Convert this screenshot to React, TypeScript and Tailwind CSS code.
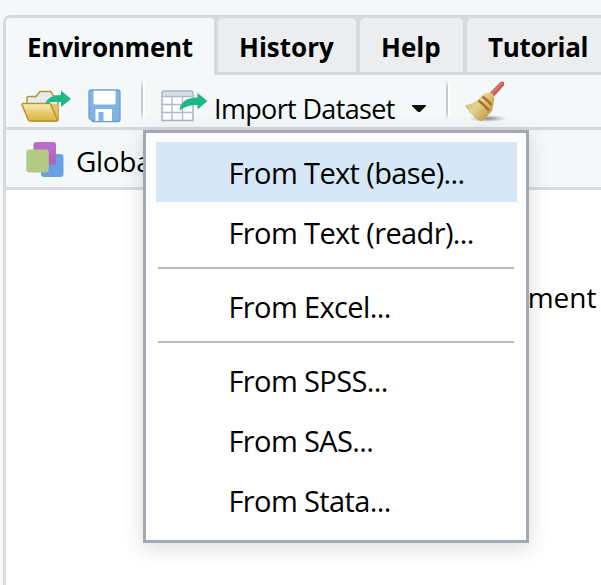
import React from "react";

const font = "font-['Open_Sans','Noto_Sans',sans-serif]";

function FolderIcon() {
  return (
    <svg width="50" height="34" viewBox="0 0 50 34" className="block">
      <defs>
        <linearGradient id="fold" x1="0" y1="0" x2="0" y2="1">
          <stop offset="0" stopColor="#f8efc0" />
          <stop offset="0.45" stopColor="#e9cf78" />
          <stop offset="1" stopColor="#ddb43d" />
        </linearGradient>
      </defs>
      <path d="M6 14V9q0-1.500 1.500-1.500H15l4-5h11l2 4 4 1.500q1 .5 1 2V30q0 2-2 2H11z" fill="#e9eaeb" stroke="#b79632" strokeWidth="1.500" />
      <path d="M29 15h7.500v16l-2 .5z" fill="#e5c566" />
      <path d="M1 15.500q0-1 1-1h26.500q1 0 1.500 1.500l6.500 15q.3 1-1 1H9q-1.200 0-1.700-1z" fill="url(#fold)" stroke="#b8932c" strokeWidth="1.500" />
      <path d="M24 15Q27 6 40 6V1.500L50 10l-10 8v-5q-10-.8-16 2z" fill="#1cb886" />
    </svg>
  );
}

function SaveIcon() {
  return (
    <svg width="33" height="34" viewBox="0 0 33 34" className="block">
      <path d="M3 1h27q2 0 2 2v27.500q0 2-2 2H5L1 29V3q0-2 2-2z" fill="#80b4e3" stroke="#6f9dca" strokeWidth="1.300" />
      <path d="M5.500 1.800h22V14q0 1.500-1.500 1.500H7Q5.500 15.500 5.500 14z" fill="#fff" />
      <path d="M7.500 20h16.500v12H7.500z" fill="#fdfdfd" />
      <path d="M10.500 23h5v9h-5z" fill="#80b4e3" />
    </svg>
  );
}

function TableIcon() {
  return (
    <svg width="48" height="34" viewBox="0 0 48 34" className="block">
      <path d="M1.500 3.500q0-2 2-2h26q2 0 2 2V31h-30z" fill="#fdfdff" />
      <path d="M1.500 6V3.500q0-2 2-2h26q2 0 2 2V6z" fill="#d7e0ea" />
      <path d="M1 6.500h30M1 14.500h30M1 22.500h30M11 6.500V31M21.500 6.500V31" stroke="#b2b9cd" strokeWidth="1.300" fill="none" />
      <path d="M1 30.500V3.500q0-2.500 2.500-2.500h26q2.500 0 2.500 2.500v27z" stroke="#a9b4c2" strokeWidth="1.500" fill="none" />
      <path d="M18.500 20.500Q19.500 8 36.500 7.500V3l10 8-10 8.500v-4.500q-10-.5-18 5.500z" fill="#1cb886" />
    </svg>
  );
}

function BroomIcon() {
  return (
    <svg width="42" height="42" viewBox="0 0 42 42" className="block">
      <defs>
        <linearGradient id="straw" x1="0.100" y1="0.200" x2="0.900" y2="0.800">
          <stop offset="0" stopColor="#cdb673" />
          <stop offset="0.400" stopColor="#e6d592" />
          <stop offset="1" stopColor="#bd9545" />
        </linearGradient>
        <radialGradient id="dust">
          <stop offset="0" stopColor="#777" stopOpacity="0.850" />
          <stop offset="1" stopColor="#888" stopOpacity="0" />
        </radialGradient>
      </defs>
      <ellipse cx="24" cy="37.500" rx="19" ry="3.500" fill="url(#dust)" />
      <path d="M26 11.500L36.500 .9q1.300-.7 3.500 0V4.500L30 15.500z" fill="#c95f54" />
      <path d="M27.500 12.500L38 2" stroke="#dc8377" strokeWidth="1.200" />
      <path d="M19 13.500Q24 10 28 12.500q3.500 3 2 8L28 30l-9 9.500q-4 1.500-7-2Q5 32 1 24.500q12-2.500 18-11z" fill="url(#straw)" />
      <path d="M7 26l7 9M12 24l5 9" stroke="#d3ba70" strokeWidth=".6" />
      <path d="M18.500 15.500q5 3.500 9 8.500M14.500 19.500q5.500 4 10.500 10" stroke="#a76b25" strokeWidth="2.300" fill="none" />
    </svg>
  );
}

function Divider() {
  return <div className="h-[40px] w-[4px] bg-linear-to-r from-[#c6cacc] from-50% to-white to-50% mask-[linear-gradient(transparent,black_20%,black_80%,transparent)]" />;
}

function MenuItem({ children, active = false }: { children: React.ReactNode; active?: boolean }) {
  return (
    <div className={`flex h-[60px] items-center pt-[1px] pl-[72.500px] text-[29px] leading-[57px] tracking-[-0.620px] whitespace-pre ${active ? "bg-[#d6e8f7]" : ""}`}>
      {children}
    </div>
  );
}

function Separator() {
  return <div className="mt-[5px] mr-[3px] mb-[7px] ml-[2px] h-[2px] bg-[#bababc]" />;
}

const inactive = "h-[57px] shrink-0 rounded-t-[5px] border-b-[3px] border-[#d6dadc] bg-[#ebedef] pt-[1px] leading-[56px]";

export default function App() {
  return (
    <div className={`relative h-[585px] w-[601px] overflow-hidden bg-[#f5f7f9] pt-[15px] pl-[3px] text-black ${font}`}>
      <div className="h-[570px] w-[640px] rounded-tl-[7px] border-t-[3px] border-l-[3px] border-[#d6dadc] bg-white">
        <div className="flex h-[57px] rounded-tl-[4px] bg-[#d6dadc] text-[26px] font-bold">
          <div className="w-[208px] shrink-0 rounded-t-[4px] bg-[#f4f8f9] pt-[1px] pl-[21px] leading-[56px] tracking-[-0.250px]">Environment</div>
          <div className={`${inactive} ml-[4px] w-[138px] pl-[21px]`}>History</div>
          <div className={`${inactive} ml-[4px] w-[103px] pl-[21px]`}>Help</div>
          <div className={`${inactive} ml-[4px] w-[170px] pl-[21px] tracking-[-0.350px]`}>Tutorial</div>
        </div>
        <div className="flex h-[55px] items-start border-b-[3px] border-[#d6dadc] bg-[#f4f8f9] pl-[15px]">
          <div className="pt-[14px]"><FolderIcon /></div>
          <div className="ml-[17px] pt-[14px]"><SaveIcon /></div>
          <div className="ml-[20px] pt-[5px]"><Divider /></div>
          <div className="ml-[16px] pt-[15px]"><TableIcon /></div>
          <div className="ml-[5px] w-[184px] pt-[14px] text-[27px] leading-[40px] tracking-[-0.650px] whitespace-nowrap">Import Dataset</div>
          <svg width="14" height="8" viewBox="0 0 14 8" className="mt-[30px] ml-[14px]"><path d="M0 0h14v1L8 7H6L0 1z" fill="#111" /></svg>
          <div className="ml-[20px] pt-[5px]"><Divider /></div>
          <div className="ml-[14px] pt-[6px]"><BroomIcon /></div>
        </div>
        <div className="flex h-[60px] border-b-[3px] border-[#d6dadc] bg-[#f4f8f9] pl-[20px]">
          <svg width="38" height="36" viewBox="0 0 38 36" className="mt-[12px]">
            <rect x="15" y="12" width="22.500" height="23" rx="3" fill="#69a1e6" />
            <rect x="7.500" y="0" width="22.500" height="23" rx="3" fill="#bb6bca" />
            <path d="M15 12h12q3 0 3 3v8H15z" fill="#8a57a8" opacity=".25" />
            <rect x=".3" y="7.500" width="22.500" height="23" rx="3" fill="#b3c984" />
          </svg>
          <span className="ml-[12px] pt-[1px] text-[28px] leading-[60px] tracking-[-0.300px]">Global</span>
        </div>
        <div className="flex h-[214px] w-[590.500px] items-center justify-end text-[28px]">
          <span>Environment</span>
        </div>
      </div>
      <div className="absolute top-[130px] left-[143px] h-[413px] w-[386px] border-[3px] border-[#a3a8b5] bg-white pt-[9px] pr-[9px] pl-[10px] shadow-[0_5px_20px_rgba(0,0,0,0.150)]">
        <MenuItem active>From Text (base)...</MenuItem>
        <MenuItem>From Text (readr)...</MenuItem>
        <Separator />
        <MenuItem>From Excel...</MenuItem>
        <Separator />
        <MenuItem>From SPSS...</MenuItem>
        <MenuItem>From SAS...</MenuItem>
        <MenuItem>From Stata...</MenuItem>
      </div>
    </div>
  );
}
